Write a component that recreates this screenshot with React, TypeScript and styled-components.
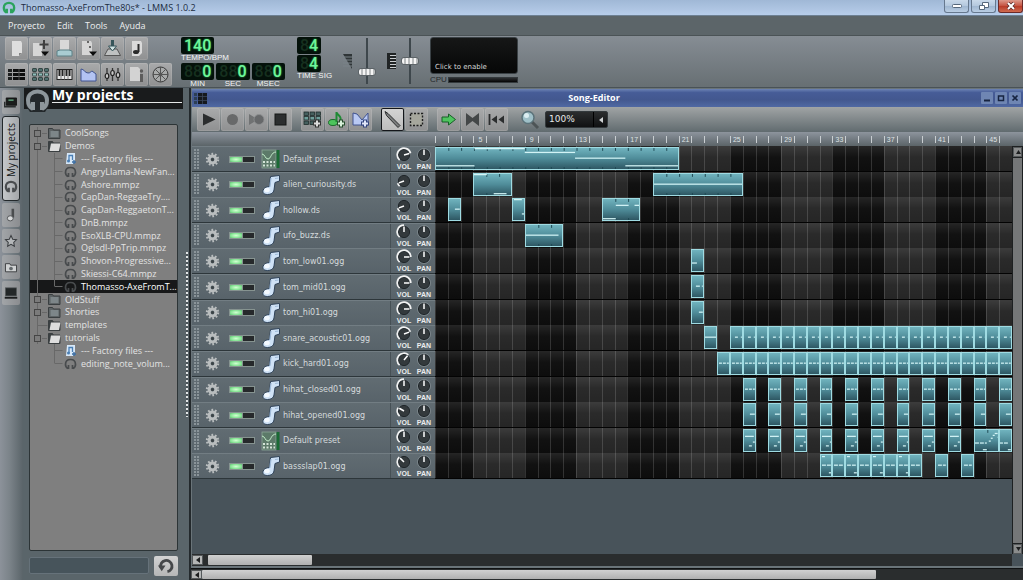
import React from 'react';
import styled, { createGlobalStyle, css } from 'styled-components';

const BARS = 45;
const UI = `'Open Sans', 'Noto Sans', sans-serif`;
const LABEL = `'Liberation Sans', Arial, sans-serif`;
const WIDE = `'DejaVu Sans', Verdana, sans-serif`;

const Global = createGlobalStyle`
  * { box-sizing: border-box; }
  html, body { margin: 0; padding: 0; background: #59646a; }
  body { font-family: ${UI}; font-size: 9px; color: #dfe3e4; overflow: hidden; }
  button, input, select { font: inherit; color: inherit; margin: 0; padding: 0; border: 0; background: none; }
  ul { list-style: none; margin: 0; padding: 0; }
  svg { display: block; }
`;

/* ---------- window frame ---------- */

const Window = styled.div`
  display: flex;
  flex-direction: column;
  height: 100vh;
`;

const TitleBar = styled.header`
  display: flex;
  align-items: center;
  flex: none;
  height: 16px;
  padding-left: 2px;
  background: linear-gradient(#a0b8d6, #b7cdea);
  border-bottom: 1px solid #6d8093;
  color: #1c2c40;
`;

const WindowTitle = styled.h1`
  flex: 1;
  margin: 0 0 0 5px;
  font: 9px/14px ${UI};
`;

const WinButtons = styled.div`
  display: flex;
  gap: 2px;
  align-self: flex-start;
`;

const WinButton = styled.button<{ $close?: boolean }>`
  display: grid;
  place-items: center;
  width: 25px;
  height: 13px;
  border: 1px solid ${p => (p.$close ? '#6b2a28' : '#66788e')};
  border-top: 0;
  border-radius: 0 0 3px 3px;
  background: ${p => (p.$close
    ? 'linear-gradient(#dd9a8c, #c4513f 50%, #b83a28 51%, #cf6b50)'
    : 'linear-gradient(#c9d9ea, #b3c7dd 50%, #9fb6d0 51%, #b9cde3)')};
`;

const MenuBar = styled.nav`
  display: flex;
  flex: none;
  gap: 12px;
  height: 20px;
  padding: 0 8px;
  background: #5c6569;
  border-bottom: 1px solid #4b5356;
`;

const MenuItem = styled.button`
  font: 9px/20px ${UI};
  color: #eceeef;
`;

/* ---------- main toolbar ---------- */

const MainToolbar = styled.div`
  display: flex;
  flex: none;
  height: 51px;
  padding: 1px 5px 0;
  background: linear-gradient(#868d94, #676f73);
`;

const ButtonGrid = styled.div`
  display: grid;
  grid-template-columns: repeat(7, 23px);
  grid-auto-rows: 23px;
  gap: 3px 1px;
  width: 176px;
  align-content: start;
`;

const ToolButton = styled.button<{ $active?: boolean; $col?: number }>`
  display: grid;
  place-items: center;
  width: 23px;
  height: 23px;
  border-radius: 2px;
  background: linear-gradient(#a9aaab, #8f9091);
  box-shadow: inset 0 0 0 1px rgba(255, 255, 255, 0.1);
  ${p => p.$col && css`grid-column: ${p.$col};`}
  ${p => p.$active && css`
    background: linear-gradient(#d4d4d4, #bcbcbc);
    box-shadow: inset 0 0 0 1px #14161a;
  `}
`;

const Displays = styled.div`
  display: flex;
  flex-direction: column;
  gap: 1px;
  width: 116px;
`;

const DisplayRow = styled.div`
  display: flex;
  gap: 2px;
  height: 25px;
`;

const TimeSig = styled.div`
  display: flex;
  flex-direction: column;
  gap: 1px;
  width: 46px;
`;

const LcdBox = styled.div`
  display: flex;
  flex-direction: column;
  align-items: center;
`;

const LcdScreen = styled.output<{ $blank: number }>`
  display: flex;
  justify-content: flex-end;
  align-self: flex-start;
  height: 17px;
  padding: 0 3px;
  border-radius: 2px;
  background: #04110a;
  color: #6ff59a;
  font: 500 16px/17px Roboto, sans-serif;
  text-shadow: 0 0 2px #2bbf5c;
  &::before {
    content: '${p => '8'.repeat(p.$blank)}';
    color: #16301f;
    text-shadow: none;
  }
`;

const LcdLabel = styled.span<{ $start?: boolean }>`
  height: 8px;
  font: 8px/8px ${LABEL};
  color: #f2f4f4;
  white-space: nowrap;
  ${p => p.$start && css`align-self: flex-start;`}
`;

const Sliders = styled.div`
  display: flex;
  gap: 11px;
  padding-right: 11px;
`;

const SliderGroup = styled.label`
  display: flex;
  align-items: center;
  gap: 5px;
  height: 48px;
`;

const VSlider = styled.input`
  appearance: none;
  writing-mode: vertical-lr;
  direction: rtl;
  width: 18px;
  height: 46px;
  background: linear-gradient(90deg, transparent 8px, #3e474c 8px 10px, transparent 10px);
  &::-webkit-slider-thumb {
    appearance: none;
    width: 18px;
    height: 8px;
    border: 1px solid #5d6468;
    border-radius: 3px;
    background: repeating-linear-gradient(90deg, #f4f4f4 0 2px, #b9bcbd 2px 4px);
  }
`;

const Visual = styled.div`
  display: flex;
  flex-direction: column;
  gap: 2px;
  width: 88px;
`;

const VisualButton = styled.button`
  display: flex;
  align-items: flex-end;
  height: 37px;
  padding: 0 4px;
  border: 1px solid #3a4145;
  border-radius: 3px;
  background: linear-gradient(#161717, #060707);
  font: 7px/11px ${WIDE};
  color: #d4d6d6;
`;

const CpuRow = styled.div`
  display: flex;
  align-items: center;
  gap: 1px;
  font: 8px/8px ${LABEL};
  color: #23282a;
`;

const CpuBar = styled.div`
  flex: 1;
  height: 6px;
  border: 1px solid #33393c;
  background: linear-gradient(#2c2f31, #050505);
`;

/* ---------- side bar ---------- */

const Body = styled.div`
  display: flex;
  flex: 1;
  min-height: 0;
  border-top: 1px solid #495257;
`;

const TabColumn = styled.nav`
  display: flex;
  flex-direction: column;
  gap: 2px;
  flex: none;
  width: 23px;
  padding: 2px 2px 0;
  background: linear-gradient(90deg, #8c929a, #7c848a 40%, #5a6469);
`;

const SideTab = styled.button<{ $active?: boolean }>`
  display: flex;
  align-items: center;
  justify-content: center;
  width: 18px;
  height: 24px;
  border-radius: 2px;
  background: linear-gradient(90deg, #a2a5a8, #8b8d90);
  ${p => p.$active && css`
    height: 85px;
    gap: 3px;
    writing-mode: vertical-rl;
    transform: rotate(180deg);
    border: 1px solid #23282b;
    border-radius: 3px;
    background: linear-gradient(90deg, #a4a7aa, #c4c7ca);
    color: #16191b;
    font: 10px/14px ${UI};
  `}
`;

const TabIconTurn = styled.span`
  transform: rotate(180deg);
`;

const SidePanel = styled.aside`
  display: flex;
  flex-direction: column;
  flex: none;
  width: 162px;
  background: #5a656a;
`;

const PanelHead = styled.div`
  display: flex;
  gap: 2px;
  height: 21px;
  margin: 0 2px 0 1px;
  padding-left: 1px;
  background: #191b1c;
`;

const PanelTitle = styled.h2`
  flex: 1;
  height: 15px;
  margin: 0 1px 0 0;
  border-bottom: 1px solid #e6e8e8;
  font: bold 14px/13px ${UI};
  color: #fff;
`;

const TreeFrame = styled.div`
  flex: 1;
  min-height: 0;
  margin: 15px 7px 5px 6px;
  padding-top: 2px;
  border: 1px solid #2c3436;
  border-radius: 2px;
  background: #7f7f7f;
  overflow: hidden;
`;

const Tree = styled.ul`
  display: grid;
  grid-auto-rows: 1fr;
  height: 243px;
`;

const TreeRow = styled.li<{ $selected?: boolean }>`
  display: flex;
  align-items: center;
  padding-left: 3px;
  color: #e3e3e3;
  overflow: hidden;
  ${p => p.$selected && css`background: #171819; color: #fff;`}
`;

const TreeName = styled.button`
  flex: 1;
  min-width: 0;
  padding-left: 4px;
  font: 9px/12px ${UI};
  text-align: left;
  white-space: nowrap;
`;

const SearchRow = styled.form`
  display: flex;
  gap: 5px;
  height: 24px;
  margin: 0 7px 0 6px;
`;

const SearchBox = styled.input`
  flex: 1;
  min-width: 0;
  height: 17px;
  margin-top: 1px;
  border: 1px solid #66727a;
  border-radius: 2px;
  background: #47545b;
`;

const RefreshButton = styled.button`
  display: grid;
  place-items: center;
  width: 24px;
  height: 20px;
  border-radius: 2px;
  background: linear-gradient(#d2d3d3, #b5b6b6);
`;

const Splitter = styled.div`
  flex: none;
  width: 4px;
  background: #5a656a;
  padding-top: 164px;
  &::before {
    content: '';
    display: block;
    width: 2px;
    height: 165px;
    margin-left: 1px;
    background: repeating-linear-gradient(#e2e5e6 0 2px, #4a5459 2px 4px);
  }
`;

/* ---------- song editor ---------- */

const Workspace = styled.main`
  display: flex;
  flex-direction: column;
  flex: 1;
  min-width: 0;
  border-left: 2px solid #23292c;
`;

const Editor = styled.section`
  display: flex;
  flex-direction: column;
  flex: 1;
  min-height: 0;
  padding: 1px 0 2px 1px;
  background: #6a7479;
  border-bottom: 1px solid #101213;
`;

const EditorTitle = styled.div`
  display: flex;
  align-items: center;
  flex: none;
  height: 18px;
  padding: 0 2px;
  background: linear-gradient(#6c83b4, #465c97 20%, #43588f 60%, #5069a3);
  color: #fff;
`;

const EditorName = styled.h2`
  flex: 1;
  margin: 0;
  font: bold 9px/16px ${UI};
  text-align: center;
`;

const EditorWinButtons = styled.div`
  display: flex;
  gap: 2px;
`;

const SmallWinButton = styled.button`
  display: grid;
  place-items: center;
  width: 12px;
  height: 12px;
  border-radius: 1px;
  background: #6f86b3;
`;

const EditorToolbar = styled.div`
  display: flex;
  align-items: center;
  flex: none;
  gap: 9px;
  height: 25px;
  padding-left: 5px;
  background: linear-gradient(#a0a4a5, #616b6f);
`;

const ToolGroup = styled.div`
  display: flex;
  gap: 1px;
`;

const ZoomLabel = styled.label`
  display: flex;
  align-items: center;
  gap: 5px;
  margin-left: 3px;
`;

const ZoomBox = styled.span`
  position: relative;
  display: block;
  width: 63px;
  height: 17px;
`;

const ZoomSelect = styled.select`
  appearance: none;
  width: 100%;
  height: 100%;
  padding-left: 3px;
  border: 1px solid #33393c;
  border-radius: 2px;
  background: linear-gradient(#2b2d2e, #101112);
  font: 9px/15px ${WIDE};
  color: #e6e8e8;
`;

const ZoomArrow = styled.span`
  position: absolute;
  top: 1px;
  right: 1px;
  bottom: 1px;
  display: grid;
  place-items: center;
  width: 14px;
  border-left: 1px solid #000;
  pointer-events: none;
`;

const EditorBody = styled.div`
  display: grid;
  grid-template-columns: 243px 1fr 11px;
  grid-template-rows: 14px 1fr 12px;
  flex: 1;
  min-height: 0;
  background: #48535a;
`;

const RulerStrip = styled.div`
  grid-column: 1 / -1;
  display: grid;
  grid-template-columns: subgrid;
  background: linear-gradient(#8d949d, #5b6468);
`;

const Ruler = styled.div`
  grid-column: 2;
  display: grid;
  grid-template-columns: repeat(${BARS}, 1fr);
  align-items: end;
`;

const Tick = styled.span`
  height: 7px;
  margin-bottom: 3px;
  border-left: 1px solid #c9ced1;
  font: 7px/8px ${LABEL};
  color: #dfe3e5;
  text-align: center;
  white-space: nowrap;
`;

const TrackArea = styled.div`
  grid-column: 1 / 3;
  min-height: 0;
`;

const TrackList = styled.ul`
  display: grid;
  grid-auto-rows: 1fr;
  height: 333px;
`;

const Track = styled.li`
  display: grid;
  grid-template-columns: 243px 1fr;
  min-height: 0;
`;

const TrackHead = styled.div`
  display: flex;
  align-items: center;
  min-width: 0;
  padding-left: 2px;
  background: linear-gradient(#616c72, #58636a);
  border-top: 1px solid #727d83;
  border-bottom: 1px solid #2d363a;
`;

const Grip = styled.span`
  width: 6px;
  height: 21px;
  background: radial-gradient(circle at 1px 1px, #8a9499 0 1px, transparent 1px) 0 0 / 3px 3px;
`;

const GearButton = styled.button`
  width: 15px;
  height: 15px;
  margin-left: 5px;
`;

const Leds = styled.span`
  display: flex;
  gap: 1px;
  width: 26px;
  height: 7px;
  margin: 0 6px 0 9px;
  padding: 1px;
  background: #869390;
`;

const Led = styled.input`
  appearance: none;
  flex: 1;
  height: 5px;
  background: #26292b;
  &:checked { background: radial-gradient(#d2ffd2, #8ae698 60%, #62b772); }
`;

const TrackName = styled.button`
  flex: 1;
  min-width: 0;
  margin-top: 1px;
  padding-left: 2px;
  font: 8px/12px ${WIDE};
  color: #d5dadc;
  text-align: left;
  white-space: nowrap;
`;

const KnobPair = styled.div`
  display: flex;
  gap: 2px;
  width: 45px;
  height: 24px;
  padding-left: 4px;
  border-left: 1px solid #465055;
`;

const KnobLabel = styled.label`
  position: relative;
  display: flex;
  flex-direction: column;
  align-items: center;
  width: 18px;
  height: 24px;
  font: bold 7px/8px ${LABEL};
  color: #eceeee;
`;

const KnobInput = styled.input`
  position: absolute;
  inset: 0;
  width: 100%;
  height: 100%;
  opacity: 0;
`;

const pct = (n: number) => `calc(${n} * 100% / ${BARS})`;

const Lane = styled.div`
  position: relative;
  border-bottom: 1px solid #030303;
  background:
    linear-gradient(rgba(255, 255, 255, 0.1), rgba(255, 255, 255, 0.02) 45%, transparent),
    repeating-linear-gradient(90deg, rgba(255, 255, 255, 0.15) 0 1px, transparent 1px ${pct(1)}),
    repeating-linear-gradient(90deg, #0d0d0d 0 ${pct(3)}, #262626 ${pct(3)} ${pct(7)}, #0d0d0d ${pct(7)} ${pct(8)});
`;

const ClipBox = styled.div`
  position: absolute;
  top: 1px;
  bottom: 1px;
  border: 1px solid #9fdbe2;
  background: linear-gradient(#70b3be, #4f8c99 50%, #2e5763);
  overflow: hidden;
  & svg { width: 100%; height: 100%; }
`;

/* ---------- scroll bars ---------- */

const VScroll = styled.div`
  display: flex;
  flex-direction: column;
  gap: 1px;
  background: #1d2021;
  padding: 1px 1px 0;
`;

const HScroll = styled.div<{ $outer?: boolean }>`
  display: flex;
  align-items: stretch;
  grid-column: 1 / 3;
  flex: none;
  gap: ${p => (p.$outer ? 0 : 5)}px;
  height: ${p => (p.$outer ? 11 : 12)}px;
  padding: 1px 0;
  background: #2a2d2e;
`;

const ScrollButton = styled.button`
  display: grid;
  place-items: center;
  flex: none;
  width: 11px;
  min-height: 9px;
  border: 1px solid #55595b;
  background: #b4b6b6;
`;

const VScrollButton = styled(ScrollButton)`
  width: 9px;
  height: 10px;
  background: #8a8c8c;
`;

const Thumb = styled.div<{ $share: string }>`
  flex: 0 0 ${p => p.$share};
  border-radius: 1px;
  background: linear-gradient(#d0d0d0, #b0b0b0);
`;

const VThumb = styled.div`
  flex: 1;
  background: #757778;
`;

const Corner = styled.div`
  background: #48535a;
`;

/* ---------- icons ---------- */

type IconName =
  | 'new' | 'newTpl' | 'open' | 'save' | 'export' | 'midi'
  | 'song' | 'bb' | 'piano' | 'auto' | 'mixer' | 'notes' | 'rack'
  | 'play' | 'record' | 'recplay' | 'stop' | 'addbb' | 'addsample' | 'addauto'
  | 'draw' | 'select' | 'scroll' | 'loop' | 'rewind'
  | 'plugin' | 'phones' | 'note' | 'star' | 'folder' | 'computer' | 'reload';

const page = 'M5 2h9l1 2v10l-3 3H5z';

const paths: Record<IconName, React.ReactNode> = {
  new: <><path d={page} fill="#dedede" /><path d="M12 17v-3h3z" fill="#858585" /></>,
  newTpl: <><path d="M2 4h9v13H2z" fill="#d6d6d6" /><path d="M13 1v9M8.500 5.500h9" stroke="#3f3f3f" strokeWidth="2" /><path d="M10 12.500h8l-4 4.500z" fill="#0c0c0c" /></>,
  open: <><path d="M5 1h9v11H5z" fill="#d8d8d8" /><path d="M5 11l-3 1v5h15v-5l-3-1z" fill="#a9ccd2" stroke="#5d8187" /></>,
  save: <><path d="M3 2h9l1 2v12H3z" fill="#d6d6d6" /><path d="M8 3h2M10 8h2" stroke="#666" strokeWidth="2" /><path d="M10 12.500h8l-4 4.500z" fill="#0c0c0c" /></>,
  export: <><path d="M5 10h9l3.500 6.500h-16z" fill="#bfc1c1" stroke="#555" /><path d="M9.500 1v7" stroke="#36555a" strokeWidth="3" fill="none" /><path d="M5.500 7h8l-4 5z" fill="#cfe0e0" stroke="#36555a" /></>,
  midi: <><path d={page} fill="#dadada" /><path d="M11.500 5v8" stroke="#2b2b2b" strokeWidth="2" fill="none" /><ellipse cx="9" cy="13" rx="3" ry="2" fill="#2b2b2b" /></>,
  song: <><path d="M1 4h4v3H1zM1 8h4v3H1zM1 12h4v3H1z" fill="#1d1f1f" /><path d="M6 4h12v3H6zM6 8h12v3H6zM6 12h12v3H6z" fill="#0d0e0e" /><path d="M12 4v11" stroke="#4a4a4a" /></>,
  bb: <g>{[0, 1, 2].map(r => [0, 1, 2].map(c => <rect key={`${r}${c}`} x={1.5 + c * 6} y={3.5 + r * 4.5} width="4" height="3" rx=".5" fill={r === 1 ? '#8fbdb9' : '#50706f'} stroke="#263635" strokeWidth=".8" />))}</g>,
  piano: <><rect x="2" y="4.500" width="15" height="10" fill="#e4e4e4" stroke="#222" /><path d="M4.500 5v6M7.500 5v6M11.500 5v6M14.500 5v6" stroke="#222" strokeWidth="2" /><path d="M6 11v4M9.500 5v10M13 11v4" stroke="#555" strokeWidth=".7" /></>,
  auto: <path d="M2 4c3 0 4 4 7 4s3-2 4-2l4 3v7H2z" fill="#b3c3f3" stroke="#40538f" />,
  mixer: <><path d="M4 3v13M9.500 3v13M15 3v13" stroke="#333" strokeWidth="1.300" /><g fill="#c7c7c7" stroke="#222" strokeWidth="1.200"><ellipse cx="4" cy="11" rx="1.800" ry="2.500" /><ellipse cx="9.500" cy="8" rx="1.800" ry="2.500" /><ellipse cx="15" cy="10" rx="1.800" ry="2.500" /></g></>,
  notes: <><path d="M3 2h8l2 2v12H3z" fill="#d3d3d3" /><circle cx="14.500" cy="6" r="1.700" fill="#5c5c5c" /><path d="M14.500 9v8" stroke="#5c5c5c" strokeWidth="3" /></>,
  rack: <><circle cx="9.500" cy="9.500" r="7.500" fill="#a9abab" stroke="#3a3a3a" /><circle cx="9.500" cy="9.500" r="2" fill="#333" /><path d="M9.500 2v15M2 9.500h15M4.200 4.200l10.600 10.600M14.800 4.200L4.200 14.800" stroke="#555" /></>,
  play: <path d="M4 3.500L16.500 9.500 4 15.500z" fill="#2b2d2e" />,
  record: <circle cx="9.500" cy="9.500" r="5.500" fill="#68696a" />,
  recplay: <><path d="M2 4l9 5.500L2 15z" fill="#707273" /><circle cx="12" cy="9.500" r="5" fill="#66686a" stroke="#8d8f90" strokeWidth=".8" /></>,
  stop: <rect x="4" y="4" width="11" height="11" fill="#2c2e2f" stroke="#151616" />,
  addbb: <><g>{[0, 1, 2].map(r => [0, 1, 2].map(c => <rect key={`${r}${c}`} x={1 + c * 6} y={2 + r * 4.5} width="4.500" height="3.500" fill={r === 1 ? '#6f9f9b' : '#46605f'} stroke="#1e2c2b" strokeWidth=".8" />))}</g><path d="M14 9.500v8M10 13.500h8" stroke="#333" strokeWidth="4" /><path d="M14 10.500v6M11 13.500h6" stroke="#ddd" strokeWidth="2" /></>,
  addsample: <><ellipse cx="6" cy="12.500" rx="4.500" ry="3" fill="#4cc45c" stroke="#1c6a2c" /><path d="M9.500 12V2c0 3 5 3 4 8" stroke="#1f8a34" strokeWidth="2" fill="none" /><path d="M14 9.500v8M10 13.500h8" stroke="#244b2b" strokeWidth="4" /><path d="M14 10.500v6M11 13.500h6" stroke="#d8f0da" strokeWidth="2" /></>,
  addauto: <><path d="M2 3l4 1 5 6 6-7v12H2z" fill="#b9c9f3" stroke="#40538f" /><path d="M14 9.500v8M10 13.500h8" stroke="#34467e" strokeWidth="4" /><path d="M14 10.500v6M11 13.500h6" stroke="#e0e6f8" strokeWidth="2" /></>,
  draw: <path d="M2 1.500l1.500 4L15 17.500l2-2L5 3.500z" fill="#7b7d7e" stroke="#2c2e2f" />,
  select: <rect x="3.500" y="3.500" width="12" height="12" fill="#a6a79d" stroke="#1e1f1f" strokeWidth="1.400" strokeDasharray="2 1.500" />,
  scroll: <path d="M3 7h6.500V4l7 5.500-7 5.500v-3H3z" fill="#4fc45f" stroke="#175f27" />,
  loop: <path d="M3 3l6.500 5L16 3v13l-6.500-5L3 16z" fill="#444748" />,
  rewind: <><path d="M2.500 4v11" stroke="#2b2d2e" strokeWidth="1.800" /><path d="M10 5.500v8l-5.500-4zM17 5.500v8l-5.500-4z" fill="#2b2d2e" /></>,
  plugin: <><path d="M3 4h14v10H3z" fill="#1b1d1c" stroke="#0b0b0b" /><path d="M6 6h7v2H6z" fill="#5f9f7a" /><path d="M1 9v7h15" stroke="#2b2f2f" strokeWidth="2" fill="none" /></>,
  phones: <path d="M6 15.500C3.500 14 2.500 11.500 2.500 9 2.500 5 5.500 2.500 9.500 2.500s7 2.500 7 6.500c0 2.500-1 5-3.500 6.500M6.500 10.500v6M12.500 10.500v6" fill="none" stroke="#4a4d50" strokeWidth="3" />,
  note: <><path d="M12 1v12" stroke="#4a4c4e" strokeWidth="3.500" /><ellipse cx="8.500" cy="14" rx="4" ry="3.500" fill="#d6d8d9" stroke="#4a4c4e" strokeWidth="1.200" /></>,
  star: <path d="M9.500 2l2.300 5 5.200.7-3.800 3.700.9 5.300-4.600-2.600-4.600 2.600.9-5.300L2 7.700 7.200 7z" fill="#b4b7b9" stroke="#3a3d40" strokeWidth="1.400" />,
  folder: <><path d="M2 5h6l1 2h8v9H2z" fill="#cfd1d2" stroke="#35383a" strokeWidth="1.200" /><circle cx="9.500" cy="11.500" r="2.500" fill="#63686b" /></>,
  computer: <><rect x="2" y="2.500" width="15" height="11" fill="#232728" stroke="#55595b" /><path d="M1 16h17" stroke="#1b1d1e" strokeWidth="2.500" /></>,
  reload: <><path d="M4 11a6 6 0 1 1 7 4.500" fill="none" stroke="#45484a" strokeWidth="3" /><path d="M1 9h8l-4 6z" fill="#45484a" /></>,
};

const Icon = ({ name, size = 19 }: { name: IconName; size?: number }) => (
  <svg width={size} height={size} viewBox="0 0 19 19" aria-hidden="true">{paths[name]}</svg>
);

const Gear = () => (
  <svg width="15" height="15" viewBox="0 0 15 15" aria-hidden="true">
    <circle cx="7.500" cy="7.500" r="5.500" fill="none" stroke="#b9bdbe" strokeWidth="2.400" strokeDasharray="1.700 1.756" />
    <circle cx="7.500" cy="7.500" r="3.400" fill="none" stroke="#b9bdbe" strokeWidth="3" />
    <circle cx="7.500" cy="7.500" r="1.500" fill="#3a4245" />
  </svg>
);

const SampleIcon = () => (
  <svg width="20" height="20" viewBox="0 0 20 20" aria-hidden="true">
    <path d="M9.500 1.500l9-1v5.500l-4.500 1.500-1 7.500c-.5 3-3 4.500-6.500 4.500-4 0-5-2-4.500-4s3-4 6.500-4z" fill="#cfe2f6" stroke="#2f4258" strokeWidth="1" />
    <path d="M10 3l-1.200 9M14 3.500l3.500-.5" stroke="#9db9d8" strokeWidth="1.200" fill="none" />
    <ellipse cx="6" cy="15" rx="2.800" ry="2.200" fill="#f3f9ff" />
  </svg>
);

const SynthIcon = () => (
  <svg width="20" height="20" viewBox="0 0 20 20" aria-hidden="true">
    <rect x="1" y="1" width="14" height="18" fill="#5c7a69" stroke="#8ba596" strokeWidth=".8" />
    <rect x="15.500" y="1" width="3" height="18" fill="#1a6a34" />
    <path d="M1 5c3 0 3 5 6 5s3-7 8-7" fill="none" stroke="#c5f0cc" />
    <path d="M2 13h12M2 16.500h12" stroke="#d4e4d8" strokeDasharray="2 1.500" strokeWidth="2" />
  </svg>
);

const FolderIcon = ({ open }: { open?: boolean }) => (
  <svg width="13" height="11" viewBox="0 0 13 11" aria-hidden="true">
    <path d="M.5.500h4l1 1.500h6.500v8.500H.5z" fill={open ? '#3b4042' : '#5d6365'} stroke="#3a3f41" />
    {open ? <path d="M3 2.500h9.500l-1.500 7.500H1.500z" fill="#dddddd" /> : <path d="M2.500 3h8v6h-8z" fill="#7d8689" />}
  </svg>
);

const FileIcon = ({ light }: { light?: boolean }) => (
  <svg width="13" height="12" viewBox="0 0 13 12" aria-hidden="true">
    {light ? (
      <><path d="M3 0h8v8l-2 3H2z" fill="#d7e8f8" /><path d="M5 8V2.500h3.500V7" stroke="#4a7fb5" strokeWidth="1.300" fill="none" /><circle cx="4.500" cy="8" r="1.500" fill="#4a7fb5" /><path d="M8 9h4M10 7v4" stroke="#3d6fa5" strokeWidth="1.400" /></>
    ) : (
      <path d="M4 10.500C2 9.500 1.500 8 1.500 6.500c0-3 2-5 5-5s5 2 5 5c0 1.500-.5 3-2.500 4M4.500 7v4M8.500 7v4" fill="none" stroke="#484b4d" strokeWidth="1.700" />
    )}
  </svg>
);

const Expander = ({ box }: { box?: boolean }) => (
  <svg width="15" height="13" viewBox="0 0 15 13" aria-hidden="true">
    {box && <rect x="1.500" y="3.500" width="6" height="6" fill="#7b7b7b" stroke="#454545" />}
    <path d={box ? 'M4.500 0v3M4.500 10v3M9 6.500h5' : 'M4.500 0v13M4.500 6.500h10'} fill="none" stroke="#686868" />
  </svg>
);

const Branch = ({ guide, last }: { guide?: boolean; last?: boolean }) => (
  <svg width="31" height="13" viewBox="0 0 31 13" aria-hidden="true">
    <path d={`${guide ? 'M4.500 0v13' : ''}M21.500 0v${last ? 6 : 13}M21.500 6.500h8`} fill="none" stroke="#686868" />
  </svg>
);

const Arrow = ({ d = 'M5 0v6L1 3z', fill = '#1d1f20' }: { d?: string; fill?: string }) => (
  <svg width="6" height="6" viewBox="0 0 6 6" aria-hidden="true"><path d={d} fill={fill} /></svg>
);

const point = (deg: number, r: number) => {
  const a = ((deg - 90) * Math.PI) / 180;
  return `${(8 + r * Math.cos(a)).toFixed(2)} ${(8 + r * Math.sin(a)).toFixed(2)}`;
};

const Knob = ({ label, angle, track }: { label: string; angle: number; track: string }) => (
  <KnobLabel>
    <svg width="16" height="16" viewBox="0 0 16 16" aria-hidden="true">
      <circle cx="8" cy="8" r="5.600" fill="#33393c" stroke="#20262a" />
      {label === 'VOL'
        ? <path d={`M${point(-140, 6.8)} A6.800 6.800 0 ${angle > 40 ? 1 : 0} 1 ${point(angle, 6.8)}`} fill="none" stroke="#f2f3f3" strokeWidth="1.700" />
        : <circle cx="8" cy="8" r="6.600" fill="none" stroke="#7f898e" strokeWidth=".8" />}
      <path d={`M${point(angle, 0)} L${point(angle, 5.5)}`} stroke="#fff" strokeWidth="1.500" />
    </svg>
    {label}
    <KnobInput type="range" min={-140} max={140} defaultValue={angle} aria-label={`${track} ${label}`} />
  </KnobLabel>
);

/* ---------- song data ---------- */

type NoteMark = [x: number, y: number, w: number];
interface Clip { start: number; len: number; notes: NoteMark[] }
interface TrackData { name: string; synth?: boolean; vol: number; clips: Clip[] }

const clip = (start: number, len: number, ...notes: NoteMark[]): Clip => ({ start, len, notes });
const every = (from: number, to: number, step: number, ...notes: NoteMark[]) => {
  const out: Clip[] = [];
  for (let b = from; b <= to; b += step) out.push(clip(b, 1, ...notes));
  return out;
};

const dashes: NoteMark[] = [[1, 10, 3], [5, 10, 3], [9, 10, 2]];

const tracks: TrackData[] = [
  { name: 'Default preset', synth: true, vol: 75, clips: [clip(0, 19, [0, 18, 39], [39, 0, 51], [90, 4, 51], [141, 10, 51], [192, 18, 54])] },
  { name: 'alien_curiousity.ds', vol: -110, clips: [clip(3, 3, [0, 0, 13], [20, 20, 13]), clip(17, 7, [0, 10, 90])] },
  { name: 'hollow.ds', vol: -110, clips: [clip(1, 1, [6, 10, 5]), clip(6, 1, [1, 0, 8], [9, 15, 3]), clip(13, 3, [0, 20, 13], [13, 6, 13], [32, 6, 5])] },
  { name: 'ufo_buzz.ds', vol: 0, clips: [clip(7, 3, [0, 10, 33])] },
  { name: 'tom_low01.ogg', vol: 90, clips: [clip(20, 1, [0, 13, 5])] },
  { name: 'tom_mid01.ogg', vol: 90, clips: [clip(20, 1, [4, 10, 4], [10, 10, 1])] },
  { name: 'tom_hi01.ogg', vol: 90, clips: [clip(20, 1, [7, 10, 4])] },
  { name: 'snare_acoustic01.ogg', vol: 70, clips: [clip(21, 1, [0, 10, 12]), ...every(23, 44, 1, [4, 10, 3], [10, 10, 1])] },
  { name: 'kick_hard01.ogg', vol: 40, clips: every(22, 44, 1, ...dashes) },
  { name: 'hihat_closed01.ogg', vol: 0, clips: every(24, 44, 2, ...dashes) },
  { name: 'hihat_opened01.ogg', vol: -60, clips: every(24, 44, 2, [6, 10, 5]) },
  {
    name: 'Default preset', synth: true, vol: 0,
    clips: [
      ...every(24, 40, 2, [1, 6, 9], [5, 16, 3], [9, 12, 2]),
      clip(42, 2, [0, 13, 4], [5, 13, 4], [10, 13, 2], [8, 20, 4], [14, 11, 2], [16, 8, 2], [18, 5, 2], [20, 3, 3], [23, 7, 1]),
      clip(44, 1, [0, 13, 3], [4, 13, 4], [8, 20, 3]),
    ],
  },
  {
    name: 'bassslap01.ogg', vol: -45,
    clips: [
      ...every(30, 36, 2, [1, 1, 3], [1, 10, 4], [6, 10, 4], [8, 18, 3]),
      ...every(31, 37, 2, [1, 10, 4], [6, 10, 4]),
      clip(39, 1, [2, 10, 4], [7, 10, 3]),
      clip(41, 1, [2, 10, 4], [7, 10, 3]),
    ],
  },
];

const ClipView = ({ start, len, notes }: Clip) => {
  const w = len * 13 - 2;
  return (
    <ClipBox style={{ left: `${(start / BARS) * 100}%`, width: `${(len / BARS) * 100}%` }}>
      <svg viewBox={`0 0 ${w} 22`} preserveAspectRatio="none" aria-hidden="true">
        {Array.from({ length: len - 1 }, (_, i) => (
          <path key={i} d={`M${(i + 1) * 13} 0v3M${(i + 1) * 13} 20v2`} stroke="#1d4752" />
        ))}
        {notes.map(([x, y, nw], i) => <rect key={i} x={x} y={y} width={nw} height="1.300" fill="#d3f4f6" />)}
      </svg>
    </ClipBox>
  );
};

interface TreeEntry { name: string; kind: 'folder' | 'open' | 'factory' | 'file'; box?: boolean; selected?: boolean; guide?: boolean; last?: boolean }

const tree: TreeEntry[] = [
  { name: 'CoolSongs', kind: 'folder', box: true },
  { name: 'Demos', kind: 'open', box: true },
  { name: '--- Factory files ---', kind: 'factory', guide: true },
  { name: 'AngryLlama-NewFan...', kind: 'file', guide: true },
  { name: 'Ashore.mmpz', kind: 'file', guide: true },
  { name: 'CapDan-ReggaeTry....', kind: 'file', guide: true },
  { name: 'CapDan-ReggaetonT...', kind: 'file', guide: true },
  { name: 'DnB.mmpz', kind: 'file', guide: true },
  { name: 'EsoXLB-CPU.mmpz', kind: 'file', guide: true },
  { name: 'Oglsdl-PpTrip.mmpz', kind: 'file', guide: true },
  { name: 'Shovon-Progressive...', kind: 'file', guide: true },
  { name: 'Skiessi-C64.mmpz', kind: 'file', guide: true },
  { name: 'Thomasso-AxeFromT...', kind: 'file', guide: true, last: true, selected: true },
  { name: 'OldStuff', kind: 'folder', box: true },
  { name: 'Shorties', kind: 'folder', box: true },
  { name: 'templates', kind: 'open' },
  { name: 'tutorials', kind: 'open', box: true },
  { name: '--- Factory files ---', kind: 'factory' },
  { name: 'editing_note_volum...', kind: 'file', last: true },
];

const Lcd = ({ value, digits, label, start }: { value: string; digits: number; label?: string; start?: boolean }) => (
  <LcdBox>
    <LcdScreen $blank={digits - value.length}>{value}</LcdScreen>
    {label && <LcdLabel $start={start}>{label}</LcdLabel>}
  </LcdBox>
);

const mainIcons: [IconName, string][] = [
  ['new', 'New project'], ['newTpl', 'New from template'], ['open', 'Open project'], ['save', 'Save project'], ['export', 'Export project'], ['midi', 'Import MIDI'],
  ['song', 'Song editor'], ['bb', 'Beat editor'], ['piano', 'Piano roll'], ['auto', 'Automation editor'], ['mixer', 'FX mixer'], ['notes', 'Project notes'], ['rack', 'Controller rack'],
];

const editorGroups: [IconName, string][][] = [
  [['play', 'Play'], ['record', 'Record'], ['recplay', 'Record while playing'], ['stop', 'Stop']],
  [['addbb', 'Add beat track'], ['addsample', 'Add sample track'], ['addauto', 'Add automation track']],
  [['draw', 'Draw mode'], ['select', 'Edit mode']],
  [['scroll', 'Auto scroll'], ['loop', 'Loop points'], ['rewind', 'Back to start']],
];

export default function App() {
  return (
    <Window>
      <Global />
      <TitleBar>
        <svg width="14" height="14" viewBox="0 0 19 19" aria-hidden="true">
          <path d="M6 15.500C3.500 14 2.500 11.500 2.500 9 2.500 5 5.500 2.500 9.500 2.500s7 2.500 7 6.500c0 2.500-1 5-3.500 6.500M6.500 10.500v6M12.500 10.500v6" fill="none" stroke="#2aa35c" strokeWidth="3.200" />
        </svg>
        <WindowTitle>Thomasso-AxeFromThe80s* - LMMS 1.0.2</WindowTitle>
        <WinButtons>
          <WinButton aria-label="Minimize"><svg width="10" height="5"><rect x=".5" y=".5" width="9" height="3" rx="1" fill="#fff" stroke="#56687c" /></svg></WinButton>
          <WinButton aria-label="Restore"><svg width="10" height="9"><path d="M3.500 .5h6v5h-6z" fill="#fff" stroke="#56687c" /><path d="M.5 3.500h5v4h-5z" fill="#fff" stroke="#56687c" /></svg></WinButton>
          <WinButton $close aria-label="Close"><svg width="10" height="8"><path d="M2 1l6 6M8 1L2 7" stroke="#5a2a2a" strokeWidth="3.500" /><path d="M2 1l6 6M8 1L2 7" stroke="#fff" strokeWidth="2" /></svg></WinButton>
        </WinButtons>
      </TitleBar>
      <MenuBar>
        {['Proyecto', 'Edit', 'Tools', 'Ayuda'].map(m => <MenuItem key={m}>{m}</MenuItem>)}
      </MenuBar>
      <MainToolbar>
        <ButtonGrid>
          {mainIcons.map(([name, label], i) => (
            <ToolButton key={name} $col={i === 6 ? 1 : undefined} aria-label={label}><Icon name={name} /></ToolButton>
          ))}
        </ButtonGrid>
        <Displays>
          <DisplayRow><Lcd value="140" digits={3} label="TEMPO/BPM" start /></DisplayRow>
          <DisplayRow>
            <Lcd value="0" digits={3} label="MIN" />
            <Lcd value="0" digits={3} label="SEC" />
            <Lcd value="0" digits={3} label="MSEC" />
          </DisplayRow>
        </Displays>
        <TimeSig>
          <Lcd value="4" digits={2} />
          <Lcd value="4" digits={2} label="TIME SIG" start />
        </TimeSig>
        <Sliders>
          <SliderGroup>
            <svg width="10" height="18" viewBox="0 0 10 18" aria-hidden="true"><path d="M0 2h9v15z" fill="#2f3537" /><path d="M0 5h9M0 8h9M0 11h9M0 14h9" stroke="#7b8388" /></svg>
            <VSlider type="range" defaultValue={20} aria-label="Master volume" />
          </SliderGroup>
          <SliderGroup>
            <svg width="9" height="18" viewBox="0 0 9 18" aria-hidden="true"><path d="M0 1h9v16H0z" fill="#202425" /><path d="M3 3.500h6M3 6.500h6M3 9.500h6M3 12.500h6M3 15.500h6" stroke="#c9cdcf" /></svg>
            <VSlider type="range" defaultValue={50} aria-label="Master pitch" />
          </SliderGroup>
        </Sliders>
        <Visual>
          <VisualButton>Click to enable</VisualButton>
          <CpuRow>CPU<CpuBar /></CpuRow>
        </Visual>
      </MainToolbar>
      <Body>
        <TabColumn>
          <SideTab aria-label="Instrument plugins"><Icon name="plugin" size={14} /></SideTab>
          <SideTab $active><TabIconTurn><Icon name="phones" size={14} /></TabIconTurn>My projects</SideTab>
          <SideTab aria-label="My samples"><Icon name="note" size={14} /></SideTab>
          <SideTab aria-label="My presets"><Icon name="star" size={14} /></SideTab>
          <SideTab aria-label="My home"><Icon name="folder" size={14} /></SideTab>
          <SideTab aria-label="My computer"><Icon name="computer" size={14} /></SideTab>
        </TabColumn>
        <SidePanel>
          <PanelHead>
            <svg width="25" height="25" viewBox="0 0 25 25" aria-hidden="true">
              <path d="M12.500 0L24 7v11l-4 6H5l-4-6V7z" fill="#23282b" />
              <path d="M8 21c-4-2-5-6-5-9 0-5 4-8.500 9.500-8.500S22 7 22 12c0 3-1 7-5 9M8 14v8M17 14v8" fill="none" stroke="#8d969b" strokeWidth="4" />
            </svg>
            <PanelTitle>My projects</PanelTitle>
          </PanelHead>
          <TreeFrame>
            <Tree>
              {tree.map((t, i) => {
                const isFolder = t.kind === 'folder' || t.kind === 'open';
                return (
                  <TreeRow key={i} $selected={t.selected}>
                    {isFolder ? <Expander box={t.box} /> : <Branch guide={t.guide} last={t.last} />}
                    {isFolder ? <FolderIcon open={t.kind === 'open'} /> : <FileIcon light={t.kind === 'factory'} />}
                    <TreeName>{t.name}</TreeName>
                  </TreeRow>
                );
              })}
            </Tree>
          </TreeFrame>
          <SearchRow onSubmit={e => e.preventDefault()}>
            <SearchBox type="text" aria-label="Filter files" />
            <RefreshButton type="button" aria-label="Refresh"><Icon name="reload" size={18} /></RefreshButton>
          </SearchRow>
        </SidePanel>
        <Splitter />
        <Workspace>
          <Editor>
            <EditorTitle>
              <svg width="13" height="11" viewBox="0 0 13 11" aria-hidden="true"><path d="M0 0h3v3H0zM0 4h3v3H0zM0 8h3v3H0z" fill="#2d3f55" /><path d="M4 0h9v11H4z" fill="#15181d" /><path d="M8.500 0v11M4 3.500h9M4 7.500h9" stroke="#3b4658" strokeWidth=".8" /></svg>
              <EditorName>Song-Editor</EditorName>
              <EditorWinButtons>
                <SmallWinButton aria-label="Minimize editor"><svg width="8" height="8"><path d="M1 6.500h6" stroke="#172440" strokeWidth="2" /></svg></SmallWinButton>
                <SmallWinButton aria-label="Maximize editor"><svg width="8" height="8"><path d="M1.500 2h5v4.500h-5z" fill="none" stroke="#172440" strokeWidth="1.500" /></svg></SmallWinButton>
                <SmallWinButton aria-label="Close editor"><svg width="8" height="8"><path d="M1.500 1.500l5 5M6.500 1.500l-5 5" stroke="#172440" strokeWidth="1.700" /></svg></SmallWinButton>
              </EditorWinButtons>
            </EditorTitle>
            <EditorToolbar>
              {editorGroups.map((g, gi) => (
                <ToolGroup key={gi}>
                  {g.map(([name, label]) => (
                    <ToolButton key={name} $active={name === 'draw'} aria-label={label}><Icon name={name} /></ToolButton>
                  ))}
                </ToolGroup>
              ))}
              <ZoomLabel>
                <svg width="20" height="20" viewBox="0 0 20 20" aria-hidden="true">
                  <path d="M12 12l6 6" stroke="#4d5456" strokeWidth="3" />
                  <circle cx="8" cy="7.500" r="6" fill="#9fc0c8" stroke="#5b7279" strokeWidth="1.500" />
                  <circle cx="6.500" cy="5.500" r="2.500" fill="#dceef2" />
                </svg>
                <ZoomBox>
                  <ZoomSelect aria-label="Zoom" defaultValue="100%">
                    <option>100%</option>
                    <option>200%</option>
                  </ZoomSelect>
                  <ZoomArrow><Arrow fill="#d0d3d4" /></ZoomArrow>
                </ZoomBox>
              </ZoomLabel>
            </EditorToolbar>
            <EditorBody>
              <RulerStrip>
                <Ruler>
                  {Array.from({ length: BARS }, (_, k) => <Tick key={k}>{(k + 1) % 4 === 0 ? k + 2 : ''}</Tick>)}
                </Ruler>
              </RulerStrip>
              <TrackArea>
                <TrackList>
                  {tracks.map((t, i) => (
                    <Track key={i}>
                      <TrackHead>
                        <Grip />
                        <GearButton aria-label={`${t.name} actions`}><Gear /></GearButton>
                        <Leds>
                          <Led type="checkbox" defaultChecked aria-label={`${t.name} on`} />
                          <Led type="checkbox" aria-label={`${t.name} solo`} />
                        </Leds>
                        {t.synth ? <SynthIcon /> : <SampleIcon />}
                        <TrackName>{t.name}</TrackName>
                        <KnobPair>
                          <Knob label="VOL" angle={t.vol} track={t.name} />
                          <Knob label="PAN" angle={0} track={t.name} />
                        </KnobPair>
                      </TrackHead>
                      <Lane>{t.clips.map(c => <ClipView key={c.start} {...c} />)}</Lane>
                    </Track>
                  ))}
                </TrackList>
              </TrackArea>
              <VScroll>
                <VScrollButton aria-label="Scroll up"><Arrow d="M1 5h5L3.500 1z" /></VScrollButton>
                <VThumb />
                <VScrollButton aria-label="Scroll down"><Arrow d="M1 1h5L3.500 5z" /></VScrollButton>
              </VScroll>
              <HScroll>
                <ScrollButton aria-label="Scroll left"><Arrow /></ScrollButton>
                <Thumb $share="104px" />
              </HScroll>
              <Corner />
            </EditorBody>
          </Editor>
          <HScroll $outer>
            <ScrollButton aria-label="Scroll workspace left"><Arrow /></ScrollButton>
            <Thumb $share="81%" />
          </HScroll>
        </Workspace>
      </Body>
    </Window>
  );
}
